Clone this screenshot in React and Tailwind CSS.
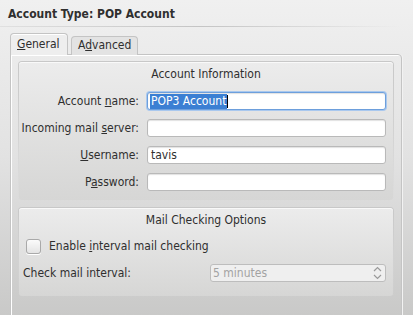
import React from "react";

const font = { fontFamily: '"DejaVu Sans Condensed", "DejaVu Sans", sans-serif' };

function Mn({ children }) {
	return <span className="underline underline-offset-[1px] decoration-1">{children}</span>;
}

function Field({ label, children }) {
	return <div className="flex items-center h-[18px]">
		<div className="w-[121px] text-right pr-[1px]">{label}</div>
		<div className="ml-[7px] w-[239px] h-[18px]">{children}</div>
	</div>
}

function TextBox({ value, focused }) {
	return <div className={`h-full rounded-[3px] border bg-white shadow-[inset_0_1px_1px_rgba(0,0,0,0.12)] flex items-center px-[2px] ${focused ? "border-[#6d9fdc] ring-1 ring-[#a9c8ee]" : "border-[#b9b9b9]"}`}>
		{value}
	</div>
}

function Group({ title, children, className }) {
	return <div className={`rounded-[4px] p-[1px] bg-gradient-to-b from-[#c8c8c8] via-[#d2d2d2] to-transparent ${className}`}>
		<div className="h-full rounded-[3px] bg-gradient-to-b from-[#ececec] to-[#d6d6d5] shadow-[inset_0_1px_0_rgba(255,255,255,0.7)]">
			<div className="text-center pt-[5px] leading-[15px]">{title}</div>
			{children}
		</div>
	</div>
}

export default function App() {
	return <div className="w-[413px] h-[315px] overflow-hidden bg-gradient-to-b from-[#f0f0f0] via-[#e2e2e2] to-[#c9c9c8] text-[12px] text-[#2f2f2f] leading-[15px]" style={font}>
		<div className="pl-[8px] pt-[7px] h-[26px] font-bold">Account Type: POP Account</div>
		<div className="h-[1px] w-[400px] bg-gradient-to-r from-[#e0e0e0] via-[#c4c4c4] to-transparent" />
		<div className="flex items-end pl-[10px] mt-[6px] h-[22px]">
			<div className="w-[58px] h-[22px] rounded-t-[4px] border border-b-0 border-[#c4c4c4] bg-[#eeeeee] shadow-[inset_0_1px_0_white] pl-[6px] pt-[3px] relative z-10">
				<Mn>G</Mn>eneral
			</div>
			<div className="ml-[3px] w-[67px] h-[19px] rounded-t-[4px] border border-b-0 border-[#c4c4c4] bg-[#e3e3e3] pl-[6px] pt-[1px]">
				A<Mn>d</Mn>vanced
			</div>
		</div>
		<div className="ml-[10px] w-[392px] h-[300px] -mt-[1px] border border-[#c4c4c4] rounded-[4px] rounded-tl-none shadow-[inset_1px_1px_0_white,1px_0_0_#f2f2f2] px-[7px] pt-[6px]">
			<Group title="Account Information" className="w-[376px] h-[140px]">
				<div className="mt-[10px] flex flex-col gap-[9px]">
					<Field label={<>Account <Mn>n</Mn>ame:</>}>
						<TextBox focused value={<><span className="bg-[#3b7fd3] text-white px-[1px]">POP3 Account</span><span className="w-[1px] h-[13px] bg-black" /></>} />
					</Field>
					<Field label={<>Incoming mail <Mn>s</Mn>erver:</>}>
						<TextBox />
					</Field>
					<Field label={<><Mn>U</Mn>sername:</>}>
						<TextBox value={<span className="pl-[1px]">tavis</span>} />
					</Field>
					<Field label={<>P<Mn>a</Mn>ssword:</>}>
						<TextBox />
					</Field>
				</div>
			</Group>
			<Group title="Mail Checking Options" className="w-[376px] h-[90px] mt-[6px]">
				<div className="flex items-center mt-[11px] pl-[7px]">
					<div className="w-[15px] h-[15px] rounded-[3px] border border-[#a9a9a9] bg-gradient-to-b from-[#fbfbfb] to-[#e4e4e4] shadow-[0_1px_0_white]" />
					<div className="ml-[8px]">Enable <Mn>i</Mn>nterval mail checking</div>
				</div>
				<div className="flex items-center mt-[10px] pl-[4px] h-[18px]">
					<div className="w-[187px]">Check mail interval:</div>
					<div className="w-[176px] h-[18px] rounded-[3px] border border-[#bdbdbd] bg-[#efefef] flex items-center justify-between pl-[2px] pr-[3px] text-[#a3a3a3]">
						<span>5 minutes</span>
						<svg width="9" height="14" viewBox="0 0 9 14" fill="none" stroke="#9a9a9a" strokeWidth="1.2">
							<path d="M1 5 L4.5 1.5 L8 5" />
							<path d="M1 9 L4.5 12.5 L8 9" />
						</svg>
					</div>
				</div>
			</Group>
		</div>
	</div>
}
